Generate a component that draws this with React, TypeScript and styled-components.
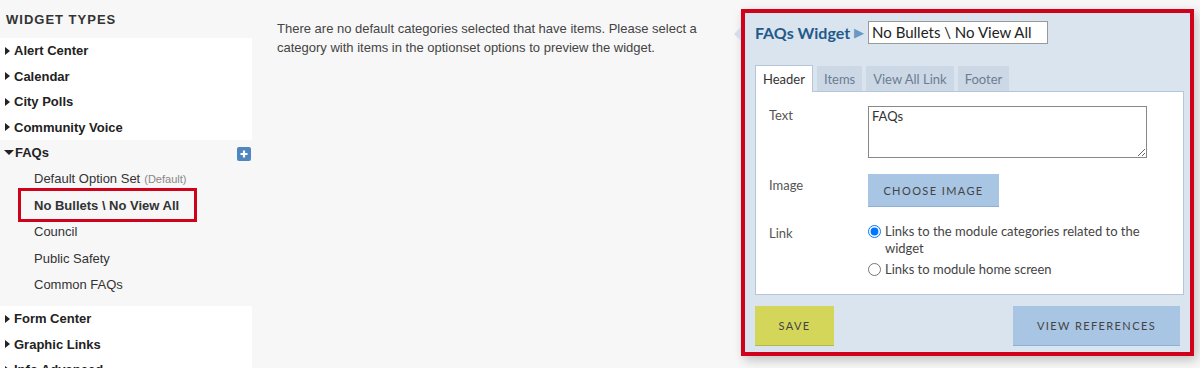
import React from 'react';
import styled, { createGlobalStyle } from 'styled-components';

const GlobalStyle = createGlobalStyle`
  html, body {
    margin: 0;
    padding: 0;
    background: #f7f7f7;
    font-family: "Liberation Sans", Arial, sans-serif;
    overflow: hidden;
  }
`;

const widgetsTop = ['Alert Center', 'Calendar', 'City Polls', 'Community Voice'];
const widgetsBottom = ['Form Center', 'Graphic Links', 'Info Advanced'];
const optionSets = ['Council', 'Public Safety', 'Common FAQs'];

export default function App() {
  return (
    <>
      <GlobalStyle />
      <Page>
        <Sidebar>
          <SidebarTitle>Widget Types</SidebarTitle>
          <Group>
            {widgetsTop.map((w) => (
              <TypeRow key={w}>
                <Caret />
                {w}
              </TypeRow>
            ))}
          </Group>
          <OpenGroup>
            <TypeRow>
              <CaretDown />
              FAQs
              <AddButton>
                <svg width="14" height="14" viewBox="0 0 14 14">
                  <rect x="0" y="0" width="14" height="14" rx="2" fill="#4f86c0" />
                  <path d="M7 3.5v7M3.5 7h7" stroke="#fff" strokeWidth="2.2" />
                </svg>
              </AddButton>
            </TypeRow>
            <SubRow>
              Default Option Set <Muted>(Default)</Muted>
            </SubRow>
            <SubRow $active>No Bullets \ No View All</SubRow>
            {optionSets.map((o) => (
              <SubRow key={o}>{o}</SubRow>
            ))}
          </OpenGroup>
          <Group>
            {widgetsBottom.map((w) => (
              <TypeRow key={w}>
                <Caret />
                {w}
              </TypeRow>
            ))}
          </Group>
        </Sidebar>

        <Main>
          <Notice>
            There are no default categories selected that have items. Please select a
            category with items in the optionset options to preview the widget.
          </Notice>

          <Panel>
            <TitleRow>
              <WidgetName>FAQs Widget</WidgetName>
              <TitleArrow>▶</TitleArrow>
              <NameInput defaultValue="No Bullets \ No View All" />
            </TitleRow>

            <Tabs>
              <Tab $active>Header</Tab>
              <Tab>Items</Tab>
              <Tab>View All Link</Tab>
              <Tab>Footer</Tab>
            </Tabs>

            <TabBody>
              <FieldRow>
                <Label $top={1}>Text</Label>
                <TextArea defaultValue="FAQs" />
              </FieldRow>
              <FieldRow>
                <Label $top={3}>Image</Label>
                <Button $bg="#a8c5e3" $w={131} $h={33}>
                  Choose Image
                </Button>
              </FieldRow>
              <FieldRow $last>
                <Label $top={2}>Link</Label>
                <Radios>
                  <RadioLine>
                    <input type="radio" name="link" defaultChecked />
                    <span>Links to the module categories related to the widget</span>
                  </RadioLine>
                  <RadioLine>
                    <input type="radio" name="link" />
                    <span>Links to module home screen</span>
                  </RadioLine>
                </Radios>
              </FieldRow>
            </TabBody>

            <Footer>
              <Button $bg="#d4d65a" $border="#b5b84a" $w={79} $h={40}>
                Save
              </Button>
              <Button $bg="#a8c5e3" $w={167} $h={40}>
                View References
              </Button>
            </Footer>
          </Panel>
        </Main>
      </Page>
    </>
  );
}

const Page = styled.div`
  display: flex;
  height: 368px;
`;

const Sidebar = styled.div`
  width: 252px;
  flex-shrink: 0;
`;

const SidebarTitle = styled.div`
  height: 38px;
  line-height: 39px;
  padding-left: 6px;
  font-size: 13px;
  font-weight: bold;
  letter-spacing: 1px;
  text-transform: uppercase;
  color: #333;
`;

const Group = styled.div`
  background: #fff;
`;

const OpenGroup = styled.div`
  padding-bottom: 8px;
`;

const TypeRow = styled.div`
  position: relative;
  display: flex;
  align-items: center;
  height: 25.5px;
  padding-left: 5px;
  font-size: 13px;
  font-weight: bold;
  color: #222;
`;

const Caret = styled.span`
  width: 0;
  height: 0;
  margin-right: 4px;
  border-top: 4.5px solid transparent;
  border-bottom: 4.5px solid transparent;
  border-left: 5px solid #222;
`;

const CaretDown = styled.span`
  width: 0;
  height: 0;
  margin-left: -1px;
  margin-right: 1px;
  border-left: 5px solid transparent;
  border-right: 5px solid transparent;
  border-top: 5px solid #222;
`;

const AddButton = styled.span`
  position: absolute;
  right: 1px;
  top: 7px;
  display: flex;
`;

const SubRow = styled.div<{ $active?: boolean }>`
  position: relative;
  display: flex;
  align-items: center;
  height: 26.5px;
  padding-left: 34px;
  font-size: 13px;
  font-weight: ${(p) => (p.$active ? 'bold' : 'normal')};
  color: #333;

  ${(p) =>
    p.$active &&
    `
    &::after {
      content: '';
      position: absolute;
      left: 18px;
      top: -4px;
      width: 173px;
      height: 28px;
      border: 3px solid #d0021b;
    }
  `}
`;

const Muted = styled.span`
  margin-left: 4px;
  font-size: 11px;
  color: #888;
`;

const Main = styled.div`
  flex: 1;
  display: flex;
  padding: 9px 6px 0 25px;
`;

const Notice = styled.p`
  flex: 1;
  margin: 10px 30px 0 0;
  font-size: 13px;
  line-height: 19px;
  color: #444;
`;

const Panel = styled.div`
  position: relative;
  box-sizing: border-box;
  width: 453px;
  height: 347px;
  flex-shrink: 0;
  border: 4px solid #d0021b;
  background: #dae4ef;
  padding: 8px 6px 6px 10px;
  box-shadow: 3px 4px 10px rgba(0, 0, 0, 0.22);
  font-family: Lato, "Open Sans", sans-serif;

  &::before {
    content: '';
    position: absolute;
    left: -11px;
    top: 14px;
    border-top: 7px solid transparent;
    border-bottom: 7px solid transparent;
    border-right: 7px solid #d3deeb;
  }
`;

const TitleRow = styled.div`
  display: flex;
  align-items: center;
  height: 22px;
`;

const WidgetName = styled.span`
  font-size: 16px;
  font-weight: bold;
  color: #1f5a8a;
`;

const TitleArrow = styled.span`
  margin: 0 4px 0 4px;
  font-size: 13px;
  color: #6b98c2;
`;

const NameInput = styled.input`
  box-sizing: border-box;
  width: 180px;
  height: 23px;
  padding: 0 3px;
  border: 1px solid #999;
  background: #fff;
  font-family: Lato, sans-serif;
  font-size: 15px;
  color: #222;
  outline: none;
`;

const Tabs = styled.div`
  display: flex;
  gap: 4px;
  margin-top: 22px;
  height: 26px;
  align-items: flex-end;
`;

const Tab = styled.div<{ $active?: boolean }>`
  box-sizing: border-box;
  height: ${(p) => (p.$active ? '27px' : '25px')};
  margin-bottom: ${(p) => (p.$active ? '-1px' : '0')};
  padding: 0 7px;
  display: flex;
  align-items: center;
  font-size: 13px;
  background: ${(p) => (p.$active ? '#fff' : '#cdd8e6')};
  color: ${(p) => (p.$active ? '#333' : '#6b7d8f')};
  border: ${(p) => (p.$active ? '1px solid #b5c6d8' : 'none')};
  border-bottom: none;
  position: relative;
  z-index: 1;
`;

const TabBody = styled.div`
  box-sizing: border-box;
  width: 429px;
  height: 204px;
  background: #fff;
  border: 1px solid #b5c6d8;
  padding: 14px 0 0 13px;
`;

const FieldRow = styled.div<{ $last?: boolean }>`
  display: flex;
  margin-bottom: ${(p) => (p.$last ? '0' : '16px')};
`;

const Label = styled.div<{ $top?: number }>`
  width: 99px;
  padding-top: ${(p) => p.$top ?? 4}px;
  font-size: 13px;
  color: #555;
`;

const TextArea = styled.textarea`
  box-sizing: border-box;
  width: 279px;
  height: 52px;
  padding: 1px 3px;
  border: 1px solid #888;
  font-family: Lato, sans-serif;
  font-size: 13px;
  color: #333;
  resize: vertical;
  outline: none;
`;

const Button = styled.button<{ $bg: string; $border?: string; $w: number; $h: number }>`
  box-sizing: border-box;
  width: ${(p) => p.$w}px;
  height: ${(p) => p.$h}px;
  background: ${(p) => p.$bg};
  border: none;
  border-bottom: 1px solid ${(p) => p.$border ?? '#8fb0d3'};
  font-family: Lato, sans-serif;
  font-size: 11px;
  letter-spacing: 1.4px;
  text-transform: uppercase;
  color: #444;
  padding: 0;
  cursor: pointer;
`;

const Radios = styled.div`
  display: flex;
  flex-direction: column;
  gap: 4px;
  width: 275px;
`;

const RadioLine = styled.label`
  display: flex;
  align-items: flex-start;
  font-size: 13px;
  line-height: 17px;
  color: #444;

  input {
    margin: 2px 4px 0 0;
    width: 13px;
    height: 13px;
    flex-shrink: 0;
  }
`;

const Footer = styled.div`
  display: flex;
  justify-content: space-between;
  width: 425px;
  margin-top: 11px;
`;
